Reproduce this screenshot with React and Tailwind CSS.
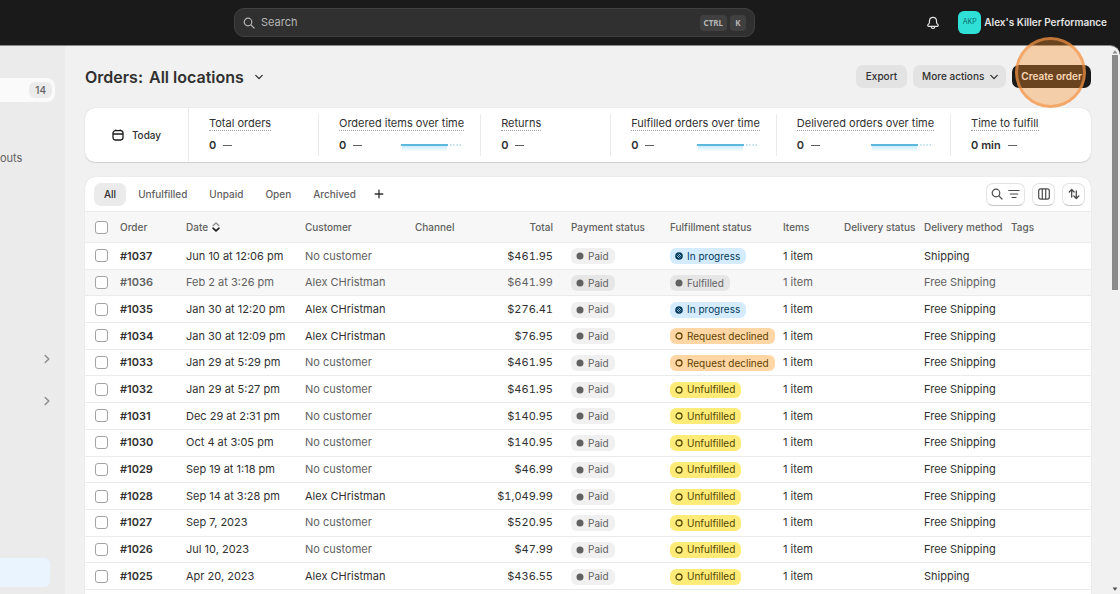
import React, { useState } from 'react';

const STATS = [
  { label: 'Total orders', value: '0' },
  { label: 'Ordered items over time', value: '0', chart: true },
  { label: 'Returns', value: '0' },
  { label: 'Fulfilled orders over time', value: '0', chart: true },
  { label: 'Delivered orders over time', value: '0', chart: true },
  { label: 'Time to fulfill', value: '0 min' },
];

const TABS = ['All', 'Unfulfilled', 'Unpaid', 'Open', 'Archived'];

const ORDERS = [
  { id: '#1037', date: 'Jun 10 at 12:06 pm', customer: '', total: '$461.95', status: 'progress', method: 'Shipping' },
  { id: '#1036', date: 'Feb 2 at 3:26 pm', customer: 'Alex CHristman', total: '$641.99', status: 'fulfilled', method: 'Free Shipping', closed: true },
  { id: '#1035', date: 'Jan 30 at 12:20 pm', customer: 'Alex CHristman', total: '$276.41', status: 'progress', method: 'Free Shipping' },
  { id: '#1034', date: 'Jan 30 at 12:09 pm', customer: 'Alex CHristman', total: '$76.95', status: 'declined', method: 'Free Shipping' },
  { id: '#1033', date: 'Jan 29 at 5:29 pm', customer: '', total: '$461.95', status: 'declined', method: 'Free Shipping' },
  { id: '#1032', date: 'Jan 29 at 5:27 pm', customer: '', total: '$461.95', status: 'unfulfilled', method: 'Free Shipping' },
  { id: '#1031', date: 'Dec 29 at 2:31 pm', customer: '', total: '$140.95', status: 'unfulfilled', method: 'Free Shipping' },
  { id: '#1030', date: 'Oct 4 at 3:05 pm', customer: '', total: '$140.95', status: 'unfulfilled', method: 'Free Shipping' },
  { id: '#1029', date: 'Sep 19 at 1:18 pm', customer: '', total: '$46.99', status: 'unfulfilled', method: 'Free Shipping' },
  { id: '#1028', date: 'Sep 14 at 3:28 pm', customer: 'Alex CHristman', total: '$1,049.99', status: 'unfulfilled', method: 'Free Shipping' },
  { id: '#1027', date: 'Sep 7, 2023', customer: '', total: '$520.95', status: 'unfulfilled', method: 'Free Shipping' },
  { id: '#1026', date: 'Jul 10, 2023', customer: '', total: '$47.99', status: 'unfulfilled', method: 'Free Shipping' },
  { id: '#1025', date: 'Apr 20, 2023', customer: 'Alex CHristman', total: '$436.55', status: 'unfulfilled', method: 'Shipping' },
];

const STATUS = {
  progress: { label: 'In progress', style: 'bg-[#d5ebff] text-[#003a5a]', dot: 'partial' },
  fulfilled: { label: 'Fulfilled', style: 'bg-[#e6e6e6] text-[#616161]', dot: 'full' },
  declined: { label: 'Request declined', style: 'bg-[#ffd6a4] text-[#5e4200]', dot: 'empty' },
  unfulfilled: { label: 'Unfulfilled', style: 'bg-[#ffeb78] text-[#4f4700]', dot: 'empty' },
};

function SearchIcon({ className }) {
  return (
    <svg className={className} viewBox="0 0 12 12" fill="none" stroke="currentColor" strokeWidth="1.2" strokeLinecap="round">
      <circle cx="5" cy="5" r="3.8" />
      <path d="M7.9 7.9 11 11" />
    </svg>
  );
}

function ChevronDown() {
  return (
    <svg className="w-2 h-2" viewBox="0 0 8 8" fill="none" stroke="currentColor" strokeWidth="1.3" strokeLinecap="round" strokeLinejoin="round">
      <path d="M.8 2.4 4 5.6 7.2 2.4" />
    </svg>
  );
}

function ChevronRight() {
  return (
    <svg className="w-2.5 h-2.5" viewBox="0 0 10 10" fill="none" stroke="currentColor" strokeWidth="1.4" strokeLinecap="round" strokeLinejoin="round">
      <path d="M3.2 1.4 6.8 5 3.2 8.6" />
    </svg>
  );
}

function Sparkline() {
  return (
    <svg className="w-16 h-3" viewBox="0 0 64 12" fill="none">
      <defs>
        <linearGradient id="spark" x1="0" y1="0" x2="0" y2="1">
          <stop offset="0" stopColor="#c5ebfb" />
          <stop offset="1" stopColor="#f4fbff" />
        </linearGradient>
      </defs>
      <rect x="2" y="6" width="45" height="6" fill="url(#spark)" />
      <path d="M1 6h47" stroke="#5cb8dc" strokeWidth="1.8" />
      <path d="M50 6h13" stroke="#a6d8ec" strokeWidth="1.3" strokeDasharray="1.4 1.8" />
    </svg>
  );
}

function Dot({ kind }) {
  return (
    <svg className="w-2 h-2" viewBox="0 0 8 8" fill="none" stroke="currentColor">
      {kind === 'full' && <circle cx="4" cy="4" r="3.5" fill="currentColor" stroke="none" />}
      {kind === 'empty' && <circle cx="4" cy="4" r="3" strokeWidth="1.3" />}
      {kind === 'partial' && (
        <>
          <circle cx="4" cy="4" r="3.8" fill="currentColor" stroke="none" />
          <path d="M1.7 3.7 4.3 6.3M3.7 1.7 6.3 4.3M2.6 2.6 5.4 5.4" stroke="#d5ebff" strokeWidth="0.7" />
        </>
      )}
    </svg>
  );
}

function Badge({ label, style, dot }) {
  return (
    <span className={`inline-flex items-center gap-1 h-4 pl-[5px] pr-1.5 rounded-md align-middle text-[10px] whitespace-nowrap ${style}`}>
      <Dot kind={dot} />
      {label}
    </span>
  );
}

function Checkbox({ label }) {
  return (
    <input
      type="checkbox"
      aria-label={label}
      className="block appearance-none w-[13px] h-[13px] rounded-[3px] border border-[#a3a3a3] bg-white checked:bg-[#303030]"
    />
  );
}

function TopBar() {
  return (
    <header className="flex items-center h-[45px] shrink-0 pl-[234px] pr-[13px] bg-[#1a1a1a]">
      <label className="flex items-center gap-1.5 w-full max-w-[521px] h-[29px] px-2 rounded-[10px] border border-[#404040] bg-[#303030] text-[#b5b5b5]">
        <SearchIcon className="w-3 h-3 shrink-0" />
        <input type="text" placeholder="Search" aria-label="Search" className="flex-1 min-w-0 bg-transparent text-[11px] placeholder-[#b5b5b5] focus:outline-none" />
        <kbd className="px-1 h-4 leading-4 rounded bg-[#404040] font-sans text-[8px] font-bold">CTRL</kbd>
        <kbd className="-ml-[3px] w-4 h-4 leading-4 text-center rounded bg-[#404040] font-sans text-[8px] font-bold">K</kbd>
      </label>
      <div className="flex items-center ml-auto shrink-0">
        <button aria-label="Notifications" className="text-[#e3e3e3]">
          <svg className="w-3.5 h-3.5" viewBox="0 0 14 14" fill="none" stroke="currentColor" strokeWidth="1.2" strokeLinejoin="round">
            <path d="M7 1.4c-2 0-3.4 1.5-3.5 3.4l-.1 1.6c0 .4-.2.8-.5 1.2l-.9 1.1c-.6.7-.1 1.7.8 1.7h8.4c.9 0 1.4-1 .8-1.7l-.9-1.1c-.3-.4-.5-.8-.5-1.2l-.1-1.6C10.4 2.9 9 1.4 7 1.4Z" />
            <path d="M5.2 10.6c0 1 .8 1.900 1.800 1.900s1.800-.9 1.800-1.900" />
          </svg>
        </button>
        <button className="flex items-center gap-[3px] ml-[18px] text-[10px] font-semibold text-[#e3e3e3]">
          <span className="flex items-center justify-center w-[23px] h-[23px] rounded-md bg-[#2ee0d6] text-[7px] font-normal text-[#0b6b68]">AKP</span>
          Alex's Killer Performance
        </button>
      </div>
    </header>
  );
}

function Sidebar() {
  return (
    <nav className="flex flex-col w-[65px] shrink-0 pt-8 bg-[#ebebeb] text-[#8a8a8a]">
      <a href="#orders" className="flex items-center justify-end w-[55px] h-6 pr-[3px] rounded-r-lg bg-[#fafafa]">
        <span className="px-1.5 rounded-md bg-[#ebebeb] text-[10px] leading-4 font-medium text-[#616161]">14</span>
      </a>
      <a href="#checkouts" className="mt-12 text-[11px] leading-4 text-[#616161]">outs</a>
      <button aria-label="Sales channels" className="mt-[188px] ml-[42px] w-2.5"><ChevronRight /></button>
      <button aria-label="Apps" className="mt-8 ml-[42px] w-2.5"><ChevronRight /></button>
      <div className="mt-[152px] w-[50px] h-[29px] rounded-r-md bg-[#eaf4ff]" />
    </nav>
  );
}

function Stats() {
  return (
    <section className="flex rounded-[10px] bg-white shadow-[0_1px_1px_#cfcfcf,0_0_1px_#c4c4c4]">
      <button className="flex items-center justify-center gap-2 w-[104px] shrink-0 border-r border-[#ebebeb] text-[10px] font-medium text-[#303030]">
        <svg className="w-3 h-3" viewBox="0 0 12 12" fill="none" stroke="#1a1a1a" strokeWidth="1.3">
          <rect x="1" y="1.7" width="10" height="9.3" rx="2.4" />
          <path d="M1 5h10M3.7 .4v1.400M8.3 .4v1.400" />
        </svg>
        Today
      </button>
      {STATS.map((s, i) => (
        <div key={s.label} className="flex py-1.5">
          <div className={`flex flex-col justify-center min-w-[130px] h-[42px] pl-5 pr-4 gap-1.5 ${i < STATS.length - 1 ? 'border-r border-[#ebebeb]' : ''}`}>
            <span className="self-start border-b border-dotted border-[#a3a3a3] text-[11px] leading-[13px] text-[#303030] whitespace-nowrap">{s.label}</span>
            <div className="flex items-center h-4 text-[11px] font-semibold text-[#303030]">
              {s.value}
              <span className="ml-[7px] w-[9px] h-px bg-[#616161]" />
              {s.chart && <div className="ml-auto"><Sparkline /></div>}
            </div>
          </div>
        </div>
      ))}
    </section>
  );
}

function TableTools() {
  const btn = 'flex items-center justify-center h-[23px] rounded-[7px] border border-[#e3e3e3] border-b-[#c4c4c4] bg-white text-[#4a4a4a]';
  return (
    <div className="flex gap-[7px] ml-auto">
      <button aria-label="Search and filter" className={`${btn} gap-[5px] w-[39px]`}>
        <SearchIcon className="w-3 h-3" />
        <svg className="w-3 h-3" viewBox="0 0 12 12" fill="none" stroke="currentColor" strokeWidth="1.2" strokeLinecap="round">
          <path d="M.8 2.5h10.4M2.3 6h7.4M4 9.5h4" />
        </svg>
      </button>
      <button aria-label="Edit columns" className={`${btn} w-[23px]`}>
        <svg className="w-3 h-3" viewBox="0 0 12 12" fill="none" stroke="currentColor" strokeWidth="1.2">
          <rect x=".7" y=".9" width="10.6" height="10.2" rx="2" />
          <path d="M4.3 1v10M7.7 1v10" />
        </svg>
      </button>
      <button aria-label="Sort" className={`${btn} w-[23px]`}>
        <svg className="w-3 h-3" viewBox="0 0 12 12" fill="none" stroke="currentColor" strokeWidth="1.3" strokeLinecap="round" strokeLinejoin="round">
          <path d="M3.7 9V1.5M1.2 4l2.5-2.5L6.2 4M8.3 3v7.5M5.8 8l2.5 2.5L10.8 8" />
        </svg>
      </button>
    </div>
  );
}

function OrdersTable() {
  return (
    <table className="w-full h-[379px] table-fixed text-left text-[11px] text-[#303030] whitespace-nowrap">
      <colgroup>
        <col className="w-[30px]" />
        <col className="w-[66px]" />
        <col className="w-[119px]" />
        <col className="w-[110px]" />
        <col className="w-[67px]" />
        <col className="w-[89px]" />
        <col className="w-[99px]" />
        <col className="w-[113px]" />
        <col className="w-[61px]" />
        <col className="w-[80px]" />
        <col className="w-[87px]" />
        <col />
      </colgroup>
      <thead>
        <tr className="h-[31px] border-y border-[#ebebeb] bg-[#f7f7f7] text-[10px] text-[#616161]">
          <th className="pl-2.5"><Checkbox label="Select all orders" /></th>
          <th className="px-[5px] font-medium">Order</th>
          <th className="px-[5px] font-medium">
            <button className="flex items-center gap-1">
              Date
              <svg className="w-2 h-2.5" viewBox="0 0 8 10" fill="none" strokeWidth="1.3" strokeLinecap="round" strokeLinejoin="round">
                <path d="m1.2 3.5 2.8-2.4 2.8 2.4" stroke="#8a8a8a" />
                <path d="m1 6.2 3 2.7 3-2.7" stroke="#1a1a1a" strokeWidth="1.6" />
              </svg>
            </button>
          </th>
          <th className="px-[5px] font-medium">Customer</th>
          <th className="px-[5px] font-medium">Channel</th>
          <th className="pr-[13px] text-right font-medium">Total</th>
          <th className="px-[5px] font-medium">Payment status</th>
          <th className="px-[5px] font-medium">Fulfillment status</th>
          <th className="px-[5px] font-medium">Items</th>
          <th className="px-[5px] font-medium">Delivery status</th>
          <th className="px-[5px] font-medium">Delivery method</th>
          <th className="px-[5px] font-medium">Tags</th>
        </tr>
      </thead>
      <tbody>
        {ORDERS.map(o => (
          <tr key={o.id} className={`border-b border-[#ebebeb] ${o.closed ? 'bg-[#f7f7f7] text-[#616161]' : ''}`}>
            <td className="pl-2.5"><Checkbox label={`Select order ${o.id}`} /></td>
            <td className="px-[5px] font-semibold">{o.id}</td>
            <td className="px-[5px]">{o.date}</td>
            <td className={`px-[5px] ${o.customer ? '' : 'text-[#616161]'}`}>{o.customer || 'No customer'}</td>
            <td />
            <td className="pr-[13px] text-right tabular-nums">{o.total}</td>
            <td className="px-[5px]"><Badge label="Paid" style={o.closed ? 'bg-[#e6e6e6] text-[#616161]' : 'bg-[#f0f0f0] text-[#616161]'} dot="full" /></td>
            <td className="px-[5px]"><Badge {...STATUS[o.status]} /></td>
            <td className="px-[5px]">1 item</td>
            <td />
            <td className="px-[5px]">{o.method}</td>
            <td />
          </tr>
        ))}
      </tbody>
    </table>
  );
}

export default function App() {
  const [tab, setTab] = useState('All');

  return (
    <div className="flex flex-col h-screen overflow-hidden bg-[#1a1a1a] font-['Inter',sans-serif]">
      <TopBar />
      <div className="flex flex-1 min-h-0 rounded-tr-[10px] border-t border-[#8a8a8a] bg-[#f1f1f1]">
        <Sidebar />
        <main className="flex-1 min-w-0 pl-5 pr-[19px] pt-[19px]">
          <div className="flex items-center h-[23px] text-[#303030]">
            <h1 className="text-base font-semibold">Orders:</h1>
            <button className="flex items-center gap-[11px] ml-1.5 text-base font-semibold">
              All locations
              <ChevronDown />
            </button>
            <div className="flex gap-1.5 ml-auto text-[10px] font-medium">
              <button className="h-[23px] px-2.5 rounded-[7px] bg-[#e3e3e3]">Export</button>
              <button className="flex items-center gap-1.5 h-[23px] pl-[9px] pr-2 rounded-[7px] bg-[#e3e3e3]">
                More actions
                <ChevronDown />
              </button>
              <div className="relative">
                <button className="h-[23px] px-[9px] rounded-[7px] bg-[#1a1a1a] font-semibold text-white">Create order</button>
                {/* Click highlight */}
                <span className="absolute -top-7 left-[3px] w-[71px] h-[71px] rounded-full border-[3px] border-[#f39445]/65 bg-[#f98e2a]/36 pointer-events-none" />
              </div>
            </div>
          </div>

          <div className="mt-5"><Stats /></div>

          <section className="mt-[15px] pb-8 rounded-t-[10px] bg-white shadow-[0_0_1px_#c4c4c4]">
            <div className="flex items-center h-[34px] pl-[9px] pr-1.5">
              <div className="flex items-center gap-0.5">
                {TABS.map(t => (
                  <button
                    key={t}
                    onClick={() => setTab(t)}
                    className={`h-[23px] px-2.5 rounded-[7px] text-[10px] font-medium ${tab === t ? 'bg-[#ebebeb] text-[#303030]' : 'text-[#616161]'}`}
                  >
                    {t}
                  </button>
                ))}
                <button aria-label="Add view" className="ml-0.5 p-1 text-[#303030]">
                  <svg className="w-2.5 h-2.5" viewBox="0 0 10 10" fill="none" stroke="currentColor" strokeWidth="1.3" strokeLinecap="round">
                    <path d="M5 1.2v7.6M1.2 5h7.6" />
                  </svg>
                </button>
              </div>
              <TableTools />
            </div>
            <OrdersTable />
          </section>
        </main>

        {/* Scrollbar */}
        <div className="flex flex-col items-center w-[10px] shrink-0 pt-[3px] pb-0.5">
          <svg className="w-1.5 h-1.5" viewBox="0 0 6 6" fill="#8a8a8a"><path d="M3 1.2 5.4 4.6H.6Z" /></svg>
          <div className="w-1.5 h-[235px] bg-[#8a8a8a]" />
          <svg className="w-1.5 h-1.5 mt-auto" viewBox="0 0 6 6" fill="#505050"><path d="M3 4.8.6 1.4h4.8Z" /></svg>
        </div>
      </div>
    </div>
  );
}
